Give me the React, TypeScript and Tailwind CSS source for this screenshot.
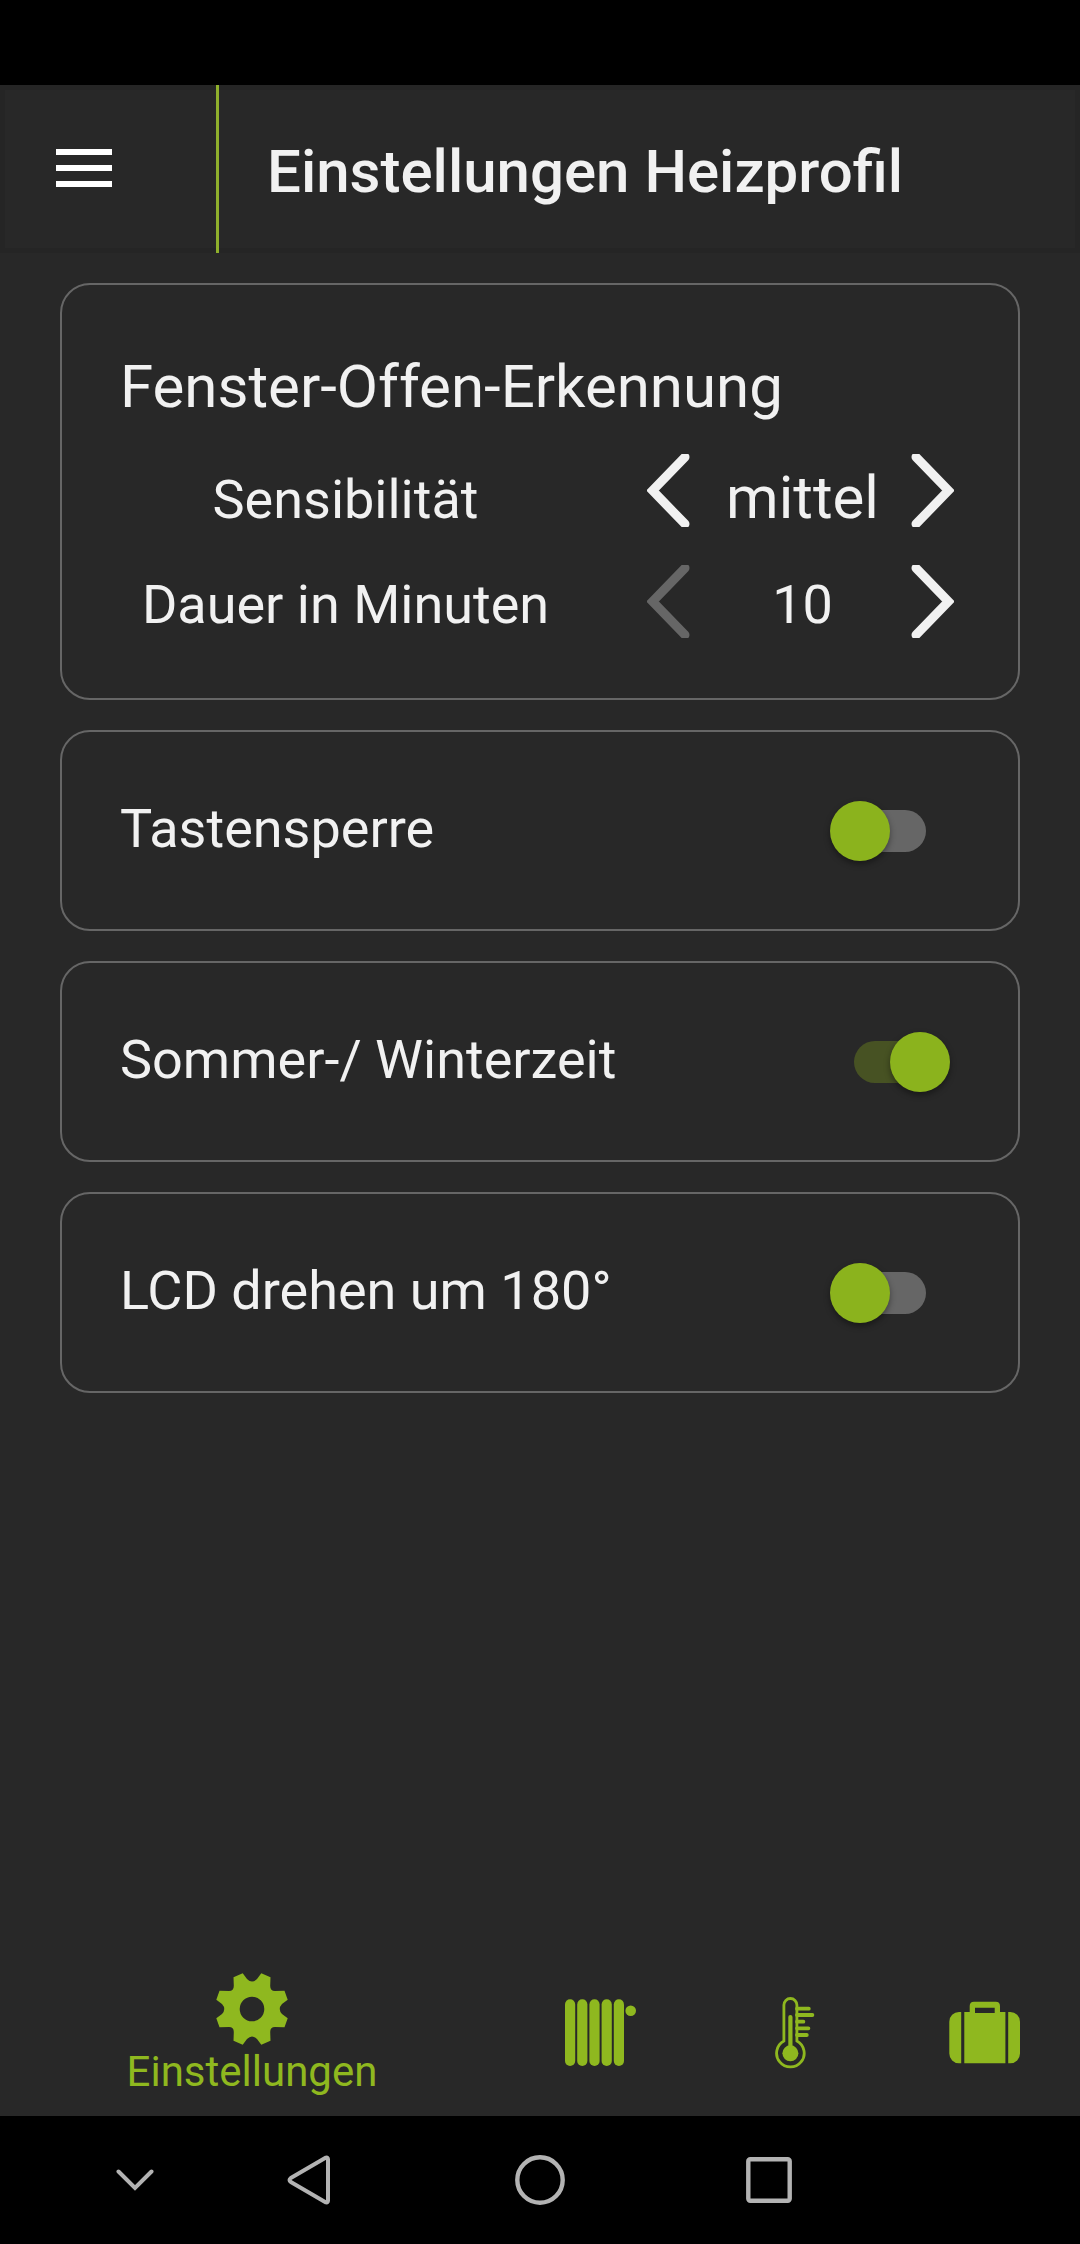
import { useState } from "react";

const SENSITIVITY = ["niedrig", "mittel", "hoch"];
const DURATIONS = ["10", "20", "30", "40", "50", "60"];

/* ================= ICONS ================= */

function ArrowIcon({ flip = false }) {
  return (
    <svg width="44" height="73" viewBox="0 0 44 73" fill="none" className={flip ? "-scale-x-100" : ""}>
      <path d="M38 3 L5.5 36.5 L38 70" stroke="currentColor" strokeWidth="9" strokeLinecap="round" />
    </svg>
  );
}

function GearIcon() {
  return (
    <svg width="72" height="72" viewBox="0 0 72 72" fill="currentColor">
      <path
        fillRule="evenodd"
        d="M26.7 .3 L31 6 Q36 11 41 6 L45.3 .3 L54.5 4.3 L54.2 13 Q54.2 18 59 18 L68.5 17.7 L71.7 26.7 L66 31 Q61.5 36 66 41 L71.7 45.3 L68.5 54.3 L59 54 Q54.2 54 54.2 59 L54.5 67.7 L45.3 71.7 L41 66 Q36 61 31 66 L26.7 71.7 L17.5 67.7 L17.8 59 Q17.8 54 13 54 L3.5 54.3 L.3 45.3 L6 41 Q10.5 36 6 31 L.3 26.7 L3.5 17.7 L13 18 Q17.8 18 17.8 13 L17.5 4.3 Z M36 23.7 A12.3 12.3 0 1 0 36 48.3 A12.3 12.3 0 1 0 36 23.7 Z"
      />
    </svg>
  );
}

function RadiatorIcon() {
  return (
    <svg width="72" height="72" viewBox="0 0 72 72" fill="currentColor">
      {[1, 13.2, 25.4, 37.6, 49.8].map((x) => (
        <rect key={x} x={x} y="2.3" width="10.2" height="66.7" rx="5.1" />
      ))}
      <circle cx="66.7" cy="13.7" r="5.3" />
    </svg>
  );
}

function ThermometerIcon() {
  return (
    <svg width="72" height="72" viewBox="0 0 72 72" fill="none" stroke="currentColor" strokeLinecap="round">
      <path
        d="M27.9 44 V8 A6.5 6.5 0 0 1 40.9 8 V44 A13.8 13.8 0 1 1 27.9 44 Z"
        strokeWidth="2.8"
      />
      <path d="M34.4 20 V56" strokeWidth="4.2" />
      <circle cx="34.4" cy="56.3" r="8" fill="currentColor" stroke="none" />
      <path d="M41 11.7 H52.8 M41 18 H56.4 M41 24.7 H47.4 M41 31.3 H52.4 M41 38 H50.8" strokeWidth="3.8" />
    </svg>
  );
}

function SuitcaseIcon() {
  return (
    <svg width="72" height="72" viewBox="0 0 72 72" fill="currentColor">
      <path d="M13.2 15 H11 A9.7 9.7 0 0 0 1.3 24.7 V56.6 A9.7 9.7 0 0 0 11 66.3 H13.2 Z" />
      <path d="M60.2 15 H62.3 A9.7 9.7 0 0 1 72 24.7 V56.6 A9.7 9.7 0 0 1 62.3 66.3 H60.2 Z" />
      <path
        fillRule="evenodd"
        d="M16.3 15 H21.7 V9 Q21.7 4.7 26 4.7 H47.7 Q52 4.7 52 9 V15 H57.4 V66.3 H16.3 Z M27 10.7 V16 H46.7 V10.7 Z"
      />
    </svg>
  );
}

/* ================= SETTINGS ROWS ================= */

function Stepper({ label, options, index, onChange, labelClass, valueClass }) {
  return (
    <div className="flex h-[111px] items-start">
      <span className={`flex-1 text-center text-[54px] ${labelClass}`}>{label}</span>
      <button
        type="button"
        aria-label={`${label} verringern`}
        disabled={index === 0}
        onClick={() => onChange(index - 1)}
        className="ml-[76px] w-12 disabled:text-[#666]"
      >
        <ArrowIcon />
      </button>
      <output className={`w-[215px] text-center ${valueClass}`}>{options[index]}</output>
      <button
        type="button"
        aria-label={`${label} erhöhen`}
        disabled={index === options.length - 1}
        onClick={() => onChange(index + 1)}
        className="w-11 disabled:text-[#666]"
      >
        <ArrowIcon flip />
      </button>
    </div>
  );
}

function ToggleCard({ label, initial = false }) {
  const [on, setOn] = useState(initial);

  return (
    <label className="flex h-[201px] items-center justify-between rounded-[30px] border-2 border-[#666] pr-[92px] pl-[58px]">
      <span className="pb-[3px] text-[54px] leading-[64px]">{label}</span>
      <input
        type="checkbox"
        role="switch"
        checked={on}
        onChange={(e) => setOn(e.target.checked)}
        className="relative h-[42px] w-[72px] shrink-0 appearance-none rounded-full bg-[#666] before:absolute before:-top-[9px] before:-left-6 before:size-[60px] before:rounded-full before:bg-[#8bb31d] before:shadow-[0_3px_6px_rgba(0,0,0,0.4)] checked:bg-[#475223] checked:before:left-9"
      />
    </label>
  );
}

/* ================= PAGE ================= */

export default function App() {
  const [sensitivity, setSensitivity] = useState(1);
  const [duration, setDuration] = useState(0);

  return (
    <div className="flex min-h-screen flex-col bg-[#282828] font-[Roboto,sans-serif] text-[#f1f1f1]">
      <div className="h-[85px] bg-black" />

      <header className="flex h-[168px] items-stretch shadow-[inset_0_0_0_5px_#252525]">
        <button type="button" aria-label="Menü" className="w-[216px] pb-0.5 pl-14 text-white">
          <svg width="56" height="38" viewBox="0 0 56 38" fill="currentColor">
            <path d="M0 0H56V6H0Z M0 16H56V22H0Z M0 32H56V38H0Z" />
          </svg>
        </button>
        <div className="w-[3px] bg-[#8fb02c]" />
        <h1 className="self-center pt-1.5 pl-12 text-[60px] leading-[72px] font-medium">
          Einstellungen Heizprofil
        </h1>
      </header>

      <main className="flex flex-1 flex-col gap-[30px] px-[60px] pt-[30px]">
        <section className="rounded-[30px] border-2 border-[#666] pt-[66px] pr-16 pb-[22px] pl-[58px]">
          <h2 className="text-[60px] leading-[72px]">Fenster-Offen-Erkennung</h2>
          <div className="mt-[31px]">
            <Stepper
              label="Sensibilität"
              options={SENSITIVITY}
              index={sensitivity}
              onChange={setSensitivity}
              labelClass="leading-[92px]"
              valueClass="text-[60px] leading-[88px]"
            />
            <Stepper
              label="Dauer in Minuten"
              options={DURATIONS}
              index={duration}
              onChange={setDuration}
              labelClass="leading-[80px]"
              valueClass="text-[54px] leading-[80px]"
            />
          </div>
        </section>

        <ToggleCard label="Tastensperre" />
        <ToggleCard label="Sommer-/ Winterzeit" initial />
        <ToggleCard label="LCD drehen um 180°" />
      </main>

      <nav className="flex h-[168px] pt-0.5 text-[#8fb81f]">
        <button type="button" className="flex flex-1 flex-col items-center gap-[3px] pt-[23px]">
          <GearIcon />
          <span className="text-[42px] leading-[48px]">Einstellungen</span>
        </button>
        <button type="button" aria-label="Heizung" className="flex w-48 items-center justify-center">
          <RadiatorIcon />
        </button>
        <button type="button" aria-label="Temperatur" className="flex w-48 items-center justify-center">
          <ThermometerIcon />
        </button>
        <button type="button" aria-label="Urlaub" className="flex w-48 items-center justify-center">
          <SuitcaseIcon />
        </button>
      </nav>

      {/* system navigation */}
      <div className="grid h-32 grid-cols-[116fr_231fr_231fr_228fr_197fr] bg-black pl-[77px] text-[#b3b3b3]">
        <button type="button" aria-label="Ausblenden" className="flex items-center justify-center">
          <svg width="38" height="22" viewBox="0 0 38 22" fill="none">
            <path d="M2.5 2.5 L19 19 L35.5 2.5" stroke="currentColor" strokeWidth="4" strokeLinecap="round" />
          </svg>
        </button>
        <button type="button" aria-label="Zurück" className="flex items-center justify-center">
          <svg width="44" height="50" viewBox="0 0 44 50" fill="none">
            <path
              d="M39 2.6 L3.8 23 Q1.2 25 3.8 27 L39 47.4 Q41 47.8 41 45.5 V4.5 Q41 2.2 39 2.6 Z"
              stroke="currentColor"
              strokeWidth="4"
              strokeLinejoin="round"
            />
          </svg>
        </button>
        <button type="button" aria-label="Startseite" className="flex items-center justify-center">
          <svg width="50" height="50" viewBox="0 0 50 50" fill="none">
            <circle cx="25" cy="25" r="22.7" stroke="currentColor" strokeWidth="4.4" />
          </svg>
        </button>
        <button type="button" aria-label="Letzte Apps" className="flex items-center justify-center">
          <svg width="46" height="46" viewBox="0 0 46 46" fill="none">
            <rect x="2.3" y="2.3" width="41.4" height="41.4" rx="2" stroke="currentColor" strokeWidth="4.4" />
          </svg>
        </button>
      </div>
    </div>
  );
}
